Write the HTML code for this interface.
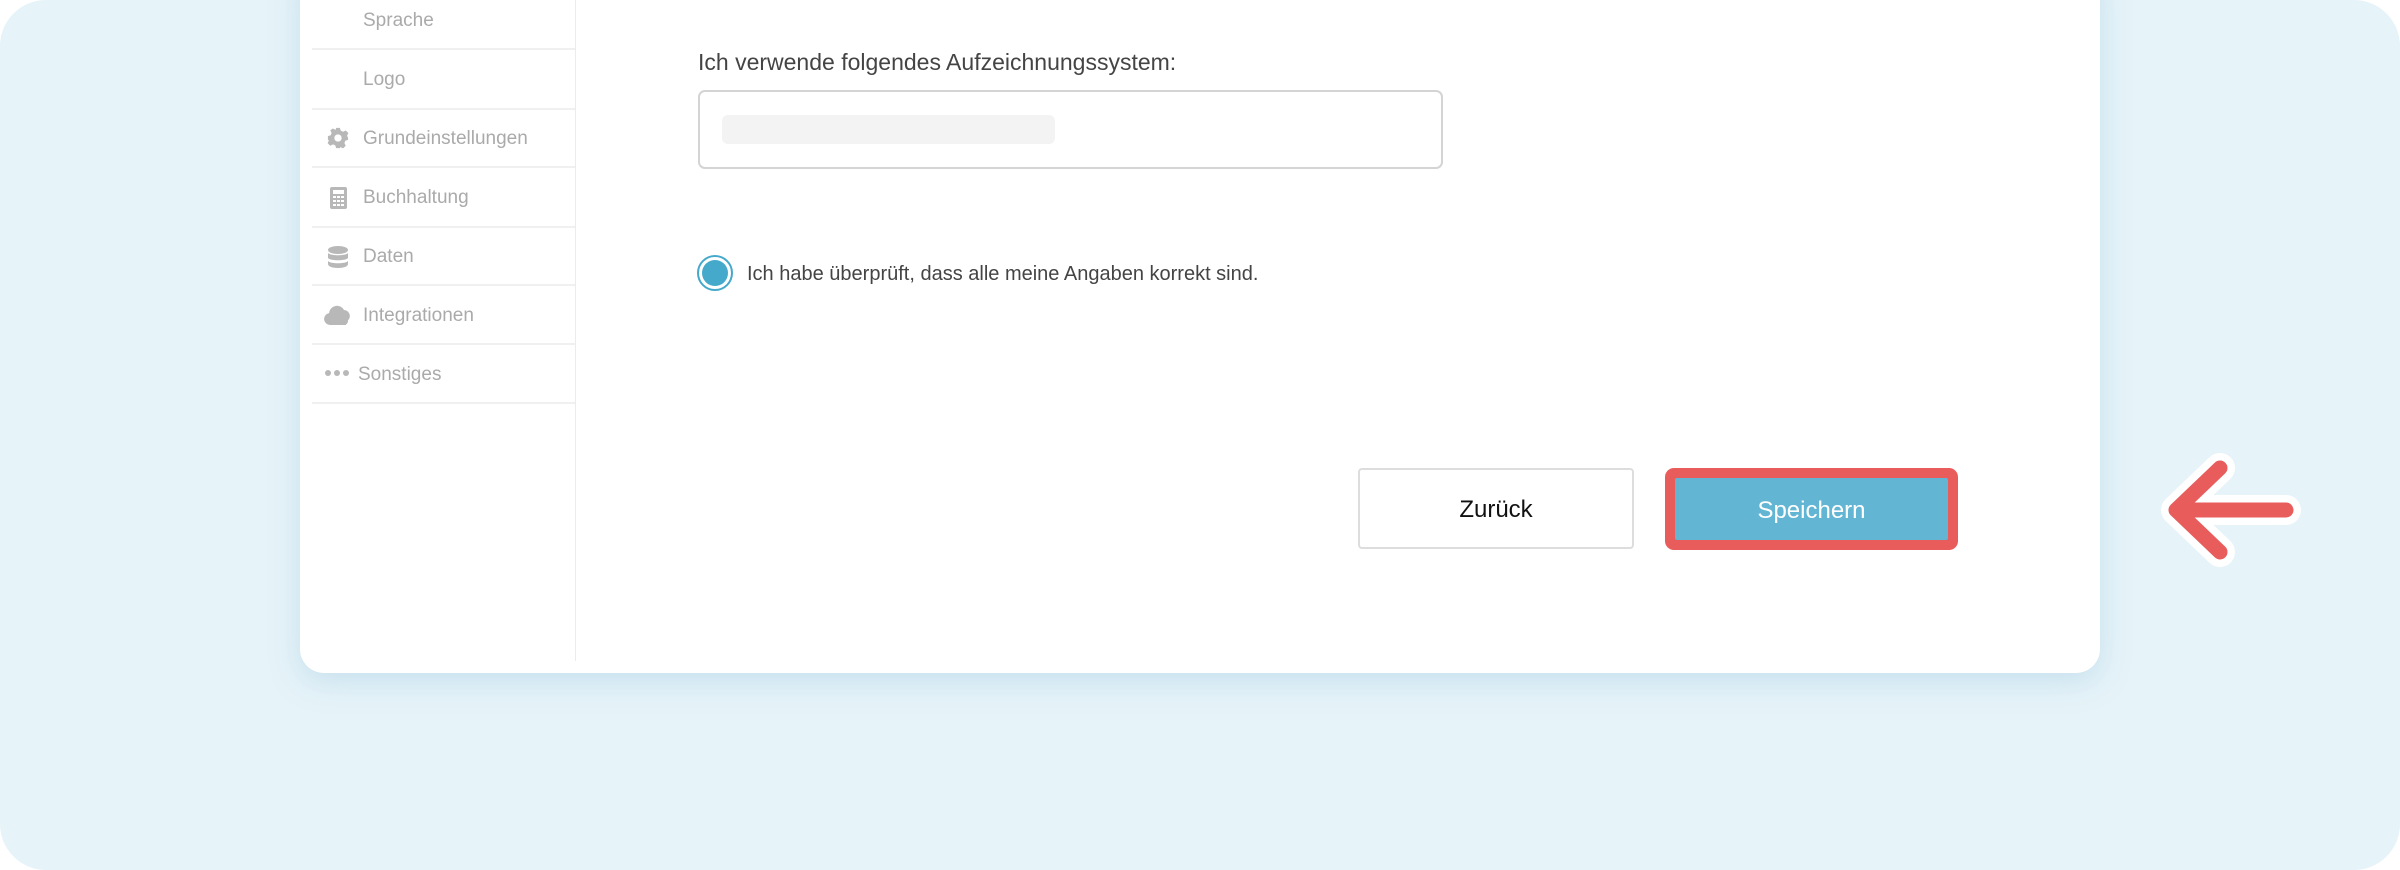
<!DOCTYPE html>
<html><head><meta charset="utf-8"><style>
html,body{margin:0;padding:0;width:2400px;height:870px;background:#fff;overflow:hidden;font-family:"Liberation Sans",sans-serif}
.bg{position:absolute;left:0;top:0;width:2400px;height:870px;background:#e6f3f9;border-radius:46px}
.card{position:absolute;left:300px;top:-40px;width:1800px;height:713px;background:#fff;border-radius:24px;box-shadow:0 8px 30px rgba(140,190,215,.35)}
.side{position:absolute;left:575px;top:0;width:1px;height:661px;background:#ececec}
.line{position:absolute;left:312px;width:263px;height:2px;background:#f0f0f0}
.it{position:absolute;left:363px;font-size:19px;color:#aaa;line-height:20px}
.ic{position:absolute;fill:#b8b8b8}
.lbl{position:absolute;left:698px;top:49px;font-size:23px;color:#444}
.inp{position:absolute;left:698px;top:90px;width:741px;height:75px;border:2px solid #d4d4d4;border-radius:7px}
.bar{position:absolute;left:722px;top:115px;width:333px;height:29px;background:#f3f3f3;border-radius:6px}
.radio{position:absolute;left:697px;top:255px;width:32px;height:32px;border:2px solid #45a9cb;border-radius:50%}
.radio:after{content:"";position:absolute;left:3px;top:3px;width:26px;height:26px;border-radius:50%;background:#45a9cb}
.rt{position:absolute;left:747px;top:263px;font-size:20px;color:#444}
.b1{position:absolute;left:1358px;top:468px;width:272px;height:77px;border:2px solid #ddd;border-radius:4px;font-size:24px;color:#111;text-align:center;line-height:80px}
.b2{position:absolute;left:1665px;top:468px;width:293px;height:82px;background:#e85c5c;border-radius:9px}
.b2 div{position:absolute;left:10px;top:10px;right:10px;bottom:10px;background:#62b6d3;color:#fff;font-size:24px;text-align:center;line-height:66px;border-radius:2px}
</style></head><body>
<div class="bg"></div>
<div class="card"></div>
<div class="side"></div>
<div class="it" style="top:11px">Sprache</div>
<div class="line" style="top:48px"></div>
<div class="it" style="top:70px">Logo</div>
<div class="line" style="top:108px"></div>
<svg class="ic" style="left:327px;top:127px" width="22" height="22" viewBox="0 0 24 24"><path d="M10 1h4l1 3 2.5 1.2 3-1.4 2.8 2.8-1.4 3L23 12v0l0 2-3 1-1 2.5 1.4 3-2.8 2.8-3-1.4L14 23h-4l-1-3-2.5-1-3 1.4-2.8-2.8 1.4-3L1 14v-4l3-1 1-2.5-1.4-3L6.4 1.7l3 1.4zM12 8a4 4 0 100 8 4 4 0 000-8z"/></svg>
<div class="it" style="top:129px">Grundeinstellungen</div>
<div class="line" style="top:166px"></div>
<svg class="ic" style="left:330px;top:187px" width="17" height="22" viewBox="0 0 17 22"><rect x="0" y="0" width="17" height="22" rx="2"/><rect x="3" y="3" width="11" height="4" fill="#fff"/><g fill="#fff"><rect x="3" y="9" width="3" height="2"/><rect x="7" y="9" width="3" height="2"/><rect x="11" y="9" width="3" height="2"/><rect x="3" y="13" width="3" height="2"/><rect x="7" y="13" width="3" height="2"/><rect x="11" y="13" width="3" height="2"/><rect x="3" y="17" width="3" height="2"/><rect x="7" y="17" width="3" height="2"/><rect x="11" y="17" width="3" height="2"/></g></svg>
<div class="it" style="top:188px">Buchhaltung</div>
<div class="line" style="top:226px"></div>
<svg class="ic" style="left:328px;top:246px" width="20" height="22" viewBox="0 0 20 22"><ellipse cx="10" cy="4" rx="10" ry="4"/><path d="M0 7c2 3 18 3 20 0v5c-2 3-18 3-20 0z"/><path d="M0 15c2 3 18 3 20 0v3c0 2.5-4.5 4-10 4S0 20.5 0 18z"/></svg>
<div class="it" style="top:247px">Daten</div>
<div class="line" style="top:284px"></div>
<svg class="ic" style="left:324px;top:305px" width="28" height="20" viewBox="0 0 28 20"><path d="M6 20a6 6 0 01-1-11.9A8 8 0 0120 5a6 6 0 012 11.6V20z"/><rect x="4" y="12" width="20" height="8" rx="4"/></svg>
<div class="it" style="top:306px">Integrationen</div>
<div class="line" style="top:343px"></div>
<svg class="ic" style="left:325px;top:370px" width="24" height="6" viewBox="0 0 24 6"><circle cx="3" cy="3" r="3"/><circle cx="12" cy="3" r="3"/><circle cx="21" cy="3" r="3"/></svg>
<div class="it" style="top:365px;left:358px">Sonstiges</div>
<div class="line" style="top:402px"></div>

<div class="lbl">Ich verwende folgendes Aufzeichnungssystem:</div>
<div class="inp"></div>
<div class="bar"></div>
<div class="radio"></div>
<div class="rt">Ich habe überprüft, dass alle meine Angaben korrekt sind.</div>
<div class="b1">Zurück</div>
<div class="b2"><div>Speichern</div></div>
<svg style="position:absolute;left:0;top:0" width="2400" height="870"><g fill="none" stroke-linecap="round" stroke-linejoin="round"><path d="M2220 468L2176 510L2220 552M2176 510H2286" stroke="#fff" stroke-width="30"/><path d="M2220 468L2176 510L2220 552M2176 510H2286" stroke="#e85c5c" stroke-width="15"/></g></svg>
</body></html>
